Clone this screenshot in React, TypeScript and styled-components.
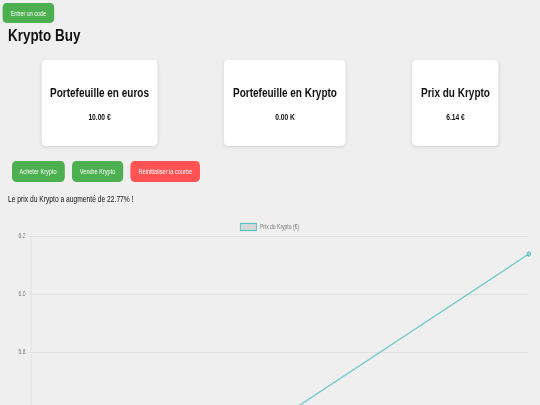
import styled, { createGlobalStyle } from 'styled-components';

const GlobalStyle = createGlobalStyle`
  html, body {
    margin: 0;
    padding: 0;
    overflow: hidden;
    background: #efefef;
    font-family: "Liberation Sans", Arial, sans-serif;
    color: #111;
  }
`;

// the reference is a horizontally squeezed page: lay out at 675px and squeeze to 540
const SQUEEZE = 0.8;

const cards = [
  { title: 'Portefeuille en euros', value: '10.00 €' },
  { title: 'Portefeuille en Krypto', value: '0.00 K' },
  { title: 'Prix du Krypto', value: '6.14 €' },
];

// chart geometry (svg coords, before squeeze)
const grid = [
  { label: '6.2', y: 21 },
  { label: '6.0', y: 79 },
  { label: '5.8', y: 137 },
  { label: '5.6', y: 195 },
];
const last = { x: 651, y: 39 };
const slope = 151 / 286;

const App = () => {
  return (
    <Page>
      <GlobalStyle />
      <CodeButton>Entrer un code</CodeButton>
      <Title>Krypto Buy</Title>

      <Cards>
        {cards.map((c) => (
          <Card key={c.title}>
            <CardTitle>{c.title}</CardTitle>
            <CardValue>{c.value}</CardValue>
          </Card>
        ))}
      </Cards>

      <Actions>
        <Button>Acheter Krypto</Button>
        <Button>Vendre Krypto</Button>
        <Button variant="danger">Réinitialiser la courbe</Button>
      </Actions>

      <Message>Le prix du Krypto a augmenté de 22.77% !</Message>

      <Chart>
        <svg width="655" height="260" viewBox="0 0 655 260">
          <rect x="290.5" y="8.5" width="20" height="7" fill="#d6d9d9" stroke="#5cc3c3" strokeWidth="1.2" />
          <ChartText x="315" y="14.5">Prix du Krypto (€)</ChartText>

          {grid.map((g) => (
            <g key={g.label}>
              <line x1="26" x2="651" y1={g.y + 0.5} y2={g.y + 0.5} stroke="#dedede" strokeWidth="1" />
              <ChartText x="22" y={g.y + 2.5} textAnchor="end">
                {g.label}
              </ChartText>
            </g>
          ))}
          <line x1="29" x2="29" y1="21" y2="260" stroke="#e2e2e2" strokeWidth="1.2" />

          <ChartText transform="translate(7 210) rotate(-90)" textAnchor="middle">
            Prix (€)
          </ChartText>

          <polyline
            points={`${last.x},${last.y} ${last.x - 500},${last.y + 500 * slope}`}
            fill="none"
            stroke="#6cc7c7"
            strokeWidth="1.3"
          />
          <circle cx={last.x} cy={last.y} r="2.2" fill="rgba(75,192,192,0.4)" stroke="#4bc0c0" strokeWidth="1" />
        </svg>
      </Chart>
    </Page>
  );
};

const Page = styled.div`
  position: relative;
  box-sizing: border-box;
  width: ${540 / SQUEEZE}px;
  height: 405px;
  padding: 0 10px;
  overflow: hidden;
  transform: scaleX(${SQUEEZE});
  transform-origin: 0 0;
`;

const CodeButton = styled.button`
  position: absolute;
  top: 3px;
  left: 2.5px;
  height: 20px;
  padding: 0 11px;
  border: none;
  border-radius: 5px;
  background: #4caf50;
  color: #fff;
  font-family: inherit;
  font-size: 6.7px;
`;

const Title = styled.h1`
  margin: 0;
  padding-top: 25px;
  font-size: 16.8px;
  line-height: 22px;
  font-weight: bold;
`;

const Cards = styled.div`
  display: flex;
  justify-content: space-around;
  margin-top: 13px;
`;

const Card = styled.div`
  display: flex;
  flex-direction: column;
  align-items: center;
  justify-content: center;
  height: 86px;
  padding: 0 11px;
  box-sizing: border-box;
  background: #fff;
  border-radius: 5px;
  box-shadow: 0 1px 4px rgba(0, 0, 0, 0.12);
`;

const CardTitle = styled.div`
  font-size: 12.5px;
  font-weight: bold;
  line-height: 15px;
  margin-top: 2px;
`;

const CardValue = styled.div`
  font-size: 8.3px;
  font-weight: bold;
  margin-top: 11px;
`;

const Actions = styled.div`
  display: flex;
  margin-top: 15px;
`;

const Button = styled.button<{ variant?: 'danger' }>`
  height: 21px;
  margin: 0 4.5px;
  padding: 0 10px;
  border: none;
  border-radius: 5px;
  background: ${(p) => (p.variant === 'danger' ? '#ff5252' : '#4caf50')};
  color: #fff;
  font-family: inherit;
  font-size: 7px;
`;

const Message = styled.p`
  margin: 11px 0 0;
  font-size: 8.4px;
  line-height: 12px;
`;

const Chart = styled.div`
  margin-top: 10px;
`;

const ChartText = styled.text`
  font-size: 6.3px;
  fill: #777;
`;

export default App;
